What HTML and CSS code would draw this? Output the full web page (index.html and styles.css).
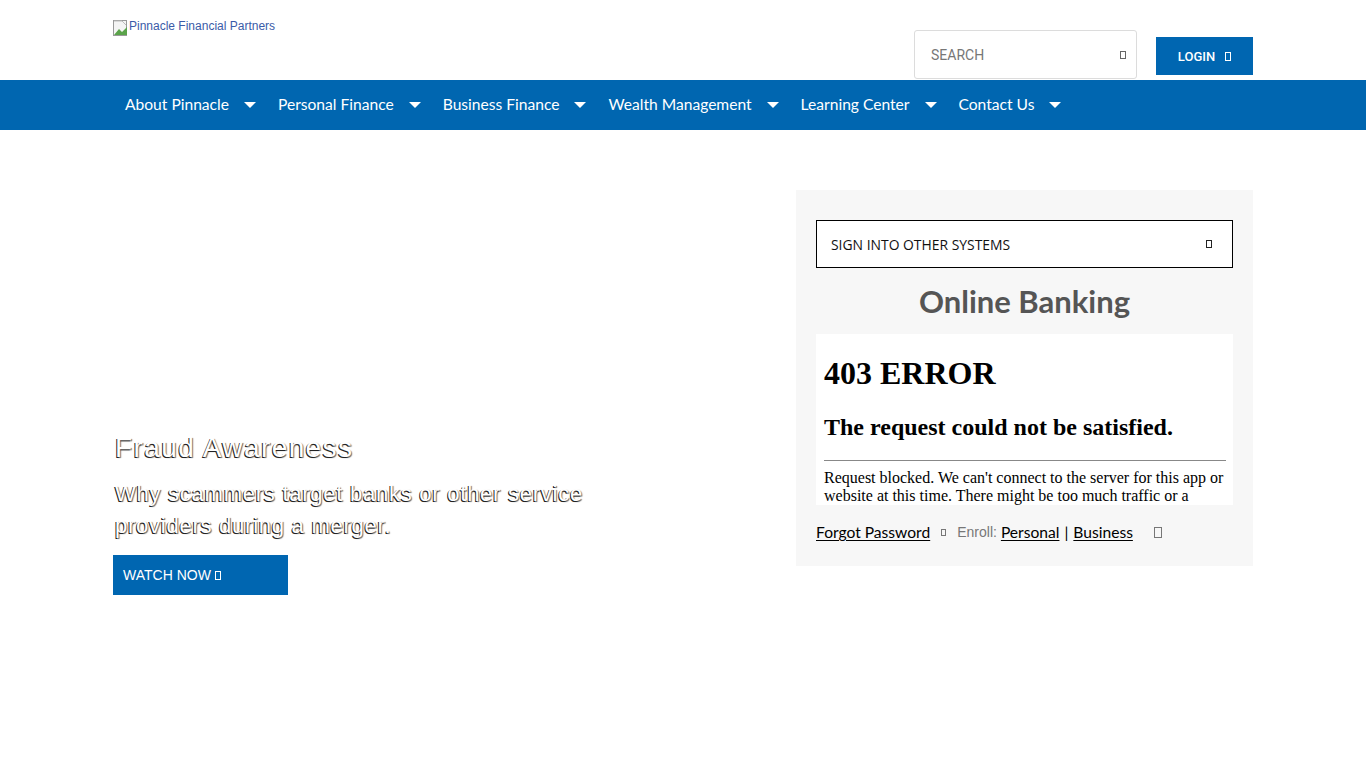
FILE: index.html
```html
<!DOCTYPE html>
<html>
<head>
<meta charset="utf-8">
<link rel="stylesheet" href="styles.css">
</head>
<body>
<header class="top">
  <div class="wrap top-inner">
    <a class="logo" href="#"><span class="broken"><svg width="16" height="16" viewBox="0 0 16 16"><rect x="0.5" y="0.5" width="13" height="15" fill="#f4f4f4" stroke="#999"/><path d="M1 15 L6 9 L9 12 L14 7 L14 15 Z" fill="#5aa34a"/><path d="M1 1 H9 L13 5" fill="none" stroke="#bbb"/></svg></span>Pinnacle Financial Partners</a>
    <div class="tools">
      <div class="search"><span class="ph">SEARCH</span><span class="gl gl-sm"></span></div>
      <a class="login" href="#">LOGIN <span class="gl gl-w"></span></a>
    </div>
  </div>
</header>
<nav class="nav">
  <div class="wrap nav-inner">
    <a href="#">About Pinnacle<span class="caret"></span></a>
    <a href="#">Personal Finance<span class="caret"></span></a>
    <a href="#">Business Finance<span class="caret"></span></a>
    <a href="#">Wealth Management<span class="caret"></span></a>
    <a href="#">Learning Center<span class="caret"></span></a>
    <a href="#">Contact Us<span class="caret"></span></a>
  </div>
</nav>
<main class="wrap main">
  <section class="hero">
    <h2 class="hero-title">Fraud Awareness</h2>
    <p class="hero-sub">Why scammers target banks or other service providers during a merger.</p>
    <a class="watch" href="#">WATCH NOW <span class="gl gl-w"></span></a>
  </section>
  <aside class="panel">
    <div class="systems"><span>SIGN INTO OTHER SYSTEMS</span><span class="gl gl-k"></span></div>
    <h2 class="ob">Online Banking</h2>
    <div class="frame">
      <h1>403 ERROR</h1>
      <h2>The request could not be satisfied.</h2>
      <hr>
      <p>Request blocked. We can't connect to the server for this app or website at this time. There might be too much traffic or a</p>
    </div>
    <div class="links">
      <a href="#">Forgot Password</a><span class="gl gl-g"></span><span class="enroll">Enroll:</span><a href="#">Personal</a><span class="bar">|</span><a href="#">Business</a><span class="gl gl-g gl-big"></span>
    </div>
  </aside>
</main>
</body>
</html>
```
FILE: styles.css
```css
html, body { margin: 0; padding: 0; background: #fff; }
body { font-family: "Liberation Sans", Arial, sans-serif; color: #000; }
a { text-decoration: none; }
.wrap { width: 1140px; margin: 0 auto; box-sizing: border-box; }

.top { height: 80px; }
.top-inner { display: flex; justify-content: space-between; align-items: flex-start; height: 80px; }
.logo { display: flex; align-items: flex-start; margin-top: 19px; font-size: 12px; color: #3a5ba8; line-height: 14px; }
.broken { display: inline-block; width: 16px; height: 16px; margin-top: 1px; }
.broken svg { display: block; }

.tools { display: flex; align-items: flex-start; margin-top: 30px; gap: 19px; }
.search { width: 223px; height: 49px; box-sizing: border-box; border: 1px solid #dcdcdc; border-radius: 3px; display: flex; align-items: center; justify-content: space-between; padding: 0 10px 0 16px; font-family: Roboto, "Liberation Sans", sans-serif; font-size: 14px; color: #777; }
.login { width: 97px; height: 38px; margin-top: 7px; background: #0066b1; color: #fff; display: flex; align-items: center; justify-content: center; gap: 10px; font-family: Roboto, "Liberation Sans", sans-serif; font-size: 13px; font-weight: 500; }

.gl { display: inline-block; box-sizing: border-box; width: 6px; height: 8px; border: 1px solid #555; }
.gl-sm { border-color: #666; }
.gl-w { border-color: #fff; width: 6px; height: 9px; }
.gl-k { border-color: #222; }
.gl-g { border-color: #777; width: 5px; height: 7px; margin: 0 11px 0 11px; }
.gl-big { width: 8px; height: 11px; margin-left: 21px; }

.nav { background: #0066b0; height: 50px; }
.nav-inner { display: flex; align-items: center; height: 50px; padding-left: 12px; padding-bottom: 2px; }
.nav a { color: #fff; font-family: Lato, "Open Sans", sans-serif; font-size: 15.6px; display: flex; align-items: center; margin-right: 22px; }
.caret { display: inline-block; width: 0; height: 0; border-left: 6px solid transparent; border-right: 6px solid transparent; border-top: 6px solid #fff; margin-left: 15px; margin-top: 1px; }

.main { display: flex; justify-content: space-between; align-items: flex-start; padding-top: 60px; }
.hero { width: 520px; padding-top: 240px; }
.hero-title { margin: 0 0 0 2px; font-weight: normal; font-size: 28px; letter-spacing: 1.4px; line-height: 36px; color: #fff; text-shadow: -1px 1px 0 #222, 1px 1px 1px rgba(0,0,0,0.6); }
.hero-sub { margin: 12px 0 13px 2px; font-size: 22px; letter-spacing: 0.75px; line-height: 32px; color: #fff; text-shadow: -1px 1px 0 #222, 1px 1px 1px rgba(0,0,0,0.6); }
.watch { display: flex; align-items: center; gap: 4px; width: 175px; height: 40px; box-sizing: border-box; padding-left: 10px; background: #0066b1; color: #fff; font-size: 14px; }

.panel { width: 457px; background: #f7f7f7; padding: 30px 20px 25px; box-sizing: border-box; }
.systems { height: 48px; box-sizing: border-box; border: 1px solid #000; background: #fff; display: flex; align-items: center; justify-content: space-between; padding: 0 20px 0 14px; font-family: "Open Sans", sans-serif; font-size: 13.9px; color: #111; }
.ob { margin: 12px 0 12px; text-align: center; font-family: Lato, "Open Sans", sans-serif; font-weight: bold; font-size: 31px; line-height: 42px; color: #555; }
.frame { background: #fff; height: 171px; overflow: hidden; padding: 8px 7px 0 8px; box-sizing: border-box; font-family: "Liberation Serif", "Times New Roman", serif; }
.frame h1 { margin: 13px 0 0; font-size: 32px; line-height: 37px; }
.frame h2 { margin: 21px 0 0; font-size: 24px; line-height: 28px; }
.frame hr { margin: 19px 0 8px; border: 0; border-top: 1px solid #888; height: 0; }
.frame p { margin: 0; font-size: 16px; line-height: 18px; }

.links { display: flex; align-items: center; margin-top: 18px; font-family: Lato, "Open Sans", sans-serif; font-size: 15.6px; }
.links a { color: #000; text-decoration: underline; text-underline-offset: 2px; }
.enroll { font-family: "Liberation Sans", sans-serif; font-size: 14px; color: #777; margin-right: 4px; }
.bar { margin: 0 5px; }
```
